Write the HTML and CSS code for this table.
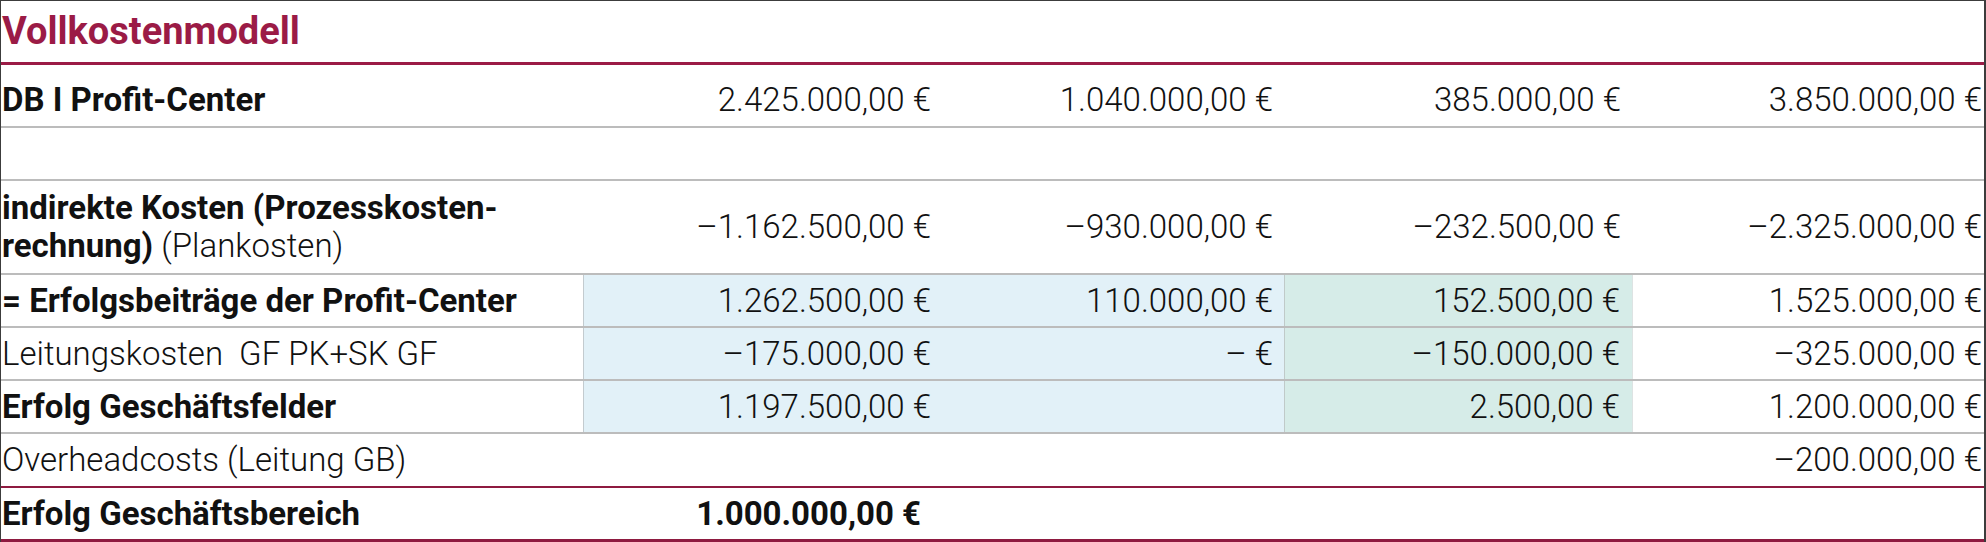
FILE: index.html
```html
<!DOCTYPE html>
<html lang="de">
<head>
<meta charset="utf-8">
<title>Vollkostenmodell</title>
<link rel="stylesheet" href="styles.css">
</head>
<body>
<div class="sheet">
  <div class="row row-title">
    <div class="cell title">Vollkostenmodell</div>
  </div>
  <div class="row row-db">
    <div class="cell label bold">DB I Profit-Center</div>
    <div class="cell num c2">2.425.000,00 €</div>
    <div class="cell num c3">1.040.000,00 €</div>
    <div class="cell num c4">385.000,00 €</div>
    <div class="cell num c5">3.850.000,00 €</div>
  </div>
  <div class="row row-std">
    <div class="cell label"></div>
    <div class="cell num c2"></div>
    <div class="cell num c3"></div>
    <div class="cell num c4"></div>
    <div class="cell num c5"></div>
  </div>
  <div class="row row-double">
    <div class="cell label"><span><b>indirekte Kosten (Prozesskosten-<br>rechnung)</b> (Plankosten)</span></div>
    <div class="cell num c2">–1.162.500,00 €</div>
    <div class="cell num c3">–930.000,00 €</div>
    <div class="cell num c4">–232.500,00 €</div>
    <div class="cell num c5">–2.325.000,00 €</div>
  </div>
  <div class="row row-std">
    <div class="cell label bold">= Erfolgsbeiträge der Profit-Center</div>
    <div class="cell num c2 blue first">1.262.500,00 €</div>
    <div class="cell num c3 blue">110.000,00 €</div>
    <div class="cell num c4 green">152.500,00 €</div>
    <div class="cell num c5">1.525.000,00 €</div>
  </div>
  <div class="row row-std">
    <div class="cell label pre">Leitungskosten  GF PK+SK GF</div>
    <div class="cell num c2 blue first">–175.000,00 €</div>
    <div class="cell num c3 blue">– €</div>
    <div class="cell num c4 green">–150.000,00 €</div>
    <div class="cell num c5">–325.000,00 €</div>
  </div>
  <div class="row row-std">
    <div class="cell label bold">Erfolg Geschäftsfelder</div>
    <div class="cell num c2 blue first">1.197.500,00 €</div>
    <div class="cell num c3 blue"></div>
    <div class="cell num c4 green">2.500,00 €</div>
    <div class="cell num c5">1.200.000,00 €</div>
  </div>
  <div class="row row-over">
    <div class="cell label">Overheadcosts (Leitung GB)</div>
    <div class="cell num c2"></div>
    <div class="cell num c3"></div>
    <div class="cell num c4"></div>
    <div class="cell num c5">–200.000,00 €</div>
  </div>
  <div class="row row-last">
    <div class="cell label bold">Erfolg Geschäftsbereich</div>
    <div class="cell num c2 bold total">1.000.000,00 €</div>
    <div class="cell num c3"></div>
    <div class="cell num c4"></div>
    <div class="cell num c5"></div>
  </div>
</div>
</body>
</html>
```

FILE: styles.css
```css
html, body {
  margin: 0;
  padding: 0;
  background: #ffffff;
}

body {
  font-family: Roboto, "Liberation Sans", sans-serif;
  color: #111111;
}

.sheet {
  width: 1986px;
  height: 542px;
  box-sizing: border-box;
  border-top: 1px solid #3c3c3c;
  border-left: 1px solid #3c3c3c;
  border-right: 2px solid #3c3c3c;
  overflow: hidden;
}

.row {
  display: grid;
  grid-template-columns: 582px 351px 350px 349px 351px;
  border-bottom: 2px solid #bcbcbc;
}

.row-title {
  height: 61px;
  border-bottom: 3px solid #9b1b46;
  grid-template-columns: 1fr;
}

.row-db { height: 61px; }
.row-db .cell { padding-top: 9px; }
.row-std { height: 51px; }
.row-double { height: 92px; }
.row-over {
  height: 52px;
  border-bottom-color: #8e1a40;
}
.row-last {
  height: 51px;
  border-bottom: 3px solid #8e1a40;
}

.cell {
  display: flex;
  align-items: center;
  box-sizing: border-box;
  font-size: 33px;
  line-height: 38px;
  min-width: 0;
  white-space: nowrap;
}

.title {
  color: #9b1b46;
  font-weight: 700;
  font-size: 38px;
  padding-left: 1px;
  padding-bottom: 2px;
}

.label {
  padding-left: 1px;
  font-weight: 300;
}

.label b,
.bold {
  font-weight: 700;
}

.pre {
  white-space: pre;
}

.num {
  justify-content: flex-end;
  font-weight: 300;
}

.c2 { padding-right: 3px; }
.c3 { padding-right: 11px; }
.c4 { padding-right: 12px; }
.c5 { padding-right: 2px; }

.num.bold { font-weight: 700; }
.total { padding-right: 13px; }

.blue {
  background: #e2f1f8;
}

.blue.first {
  border-left: 1px solid #c3cbcf;
}

.green {
  background: #d6ece8;
  border-left: 1px solid #c0cac9;
  border-right: 1px solid #dde3e3;
}
```
